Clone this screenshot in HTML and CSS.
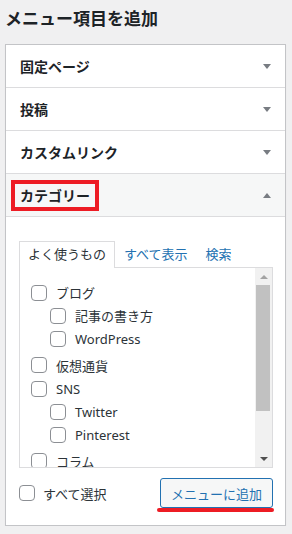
FILE: index.html
```html
<!DOCTYPE html>
<html lang="ja">
<head>
  <meta charset="UTF-8" />
  <meta name="viewport" content="width=device-width, initial-scale=1.0"/>
  <title>メニュー項目を追加</title>
  <link rel="stylesheet" href="styles.css">
</head>
<body>

  <h2 class="title">メニュー項目を追加</h2>

  <div class="panel">
    <div class="acc-row">
      <span>固定ページ</span>
      <i class="arrow down"></i>
    </div>
    <div class="acc-row">
      <span>投稿</span>
      <i class="arrow down"></i>
    </div>
    <div class="acc-row">
      <span>カスタムリンク</span>
      <i class="arrow down"></i>
    </div>
    <div class="acc-row open">
      <span class="mark">カテゴリー</span>
      <i class="arrow up"></i>
    </div>

    <div class="acc-body">
      <ul class="tabs">
        <li class="active">よく使うもの</li>
        <li>すべて表示</li>
        <li>検索</li>
      </ul>

      <div class="tab-box">
        <ul class="checklist">
          <li><span class="cb"></span>ブログ</li>
          <li class="sub">
            <ul>
              <li><span class="cb"></span>記事の書き方</li>
              <li><span class="cb"></span>WordPress</li>
            </ul>
          </li>
          <li><span class="cb"></span>仮想通貨</li>
          <li><span class="cb"></span>SNS</li>
          <li class="sub">
            <ul>
              <li><span class="cb"></span>Twitter</li>
              <li><span class="cb"></span>Pinterest</li>
            </ul>
          </li>
          <li><span class="cb"></span>コラム</li>
        </ul>
        <div class="scrollbar">
          <div class="sb-btn"><i class="sb-up"></i></div>
          <div class="sb-track"><div class="sb-thumb"></div></div>
          <div class="sb-btn"><i class="sb-down"></i></div>
        </div>
      </div>

      <div class="footer">
        <label class="select-all"><span class="cb"></span>すべて選択</label>
        <button class="add-btn">メニューに追加</button>
      </div>
    </div>
  </div>

</body>
</html>
```

FILE: styles.css
```css
* {
  margin: 0; padding: 0; box-sizing: border-box;
  font-family: 'Noto Sans', 'Noto Sans CJK JP', sans-serif;
}
body {
  background: #f0f0f1;
  color: #2c3338;
  padding: 0 6px 0 5px;
}
.title {
  padding-top: 8px;
  margin-bottom: 14px;
  line-height: 22px;
  font-size: 17px;
  font-weight: 700;
  color: #1d2327;
}
.panel {
  background: #fff;
  border: 1px solid #c3c4c7;
  box-shadow: 0 1px 1px rgba(0, 0, 0, 0.06);
}
.acc-row {
  height: 43px;
  border-bottom: 1px solid #dcdcde;
  padding: 0 14px 0 14px;
  display: flex;
  align-items: center;
  justify-content: space-between;
  font-size: 14px;
  font-weight: 700;
  color: #1d2327;
}
.acc-row.open {
  background: #f6f7f7;
}
.mark {
  margin-left: -9px;
  height: 31px;
  line-height: 23px;
  padding: 0 5px;
  border: 4px solid #ed1c24;
}
.arrow {
  width: 0;
  height: 0;
  border-left: 4px solid transparent;
  border-right: 4px solid transparent;
}
.arrow.down {
  border-top: 5px solid #787c82;
}
.arrow.up {
  border-bottom: 5px solid #787c82;
}
.acc-body {
  padding: 24px 12px 17px 13px;
}
.tabs {
  list-style: none;
  display: flex;
  font-size: 13px;
}
.tabs li {
  line-height: 25px;
  padding: 1px 9px 0;
  color: #2271b1;
}
.tabs li.active {
  color: #2c3338;
  padding: 0 8px 1px;
  margin-bottom: -1px;
  background: #fff;
  border: 1px solid #dcdcde;
  border-bottom: none;
  position: relative;
}
.tab-box {
  height: 201px;
  border: 1px solid #dcdcde;
  display: flex;
  overflow: hidden;
}
.checklist {
  flex: 1;
  list-style: none;
  padding: 13px 0 0 11px;
  font-size: 13px;
  color: #2c3338;
}
.checklist li {
  height: 23.33px;
  display: flex;
  align-items: center;
}
.checklist li.sub {
  height: auto;
  display: block;
}
.checklist ul {
  list-style: none;
  padding-left: 19px;
  margin-bottom: 2.6px;
}
.cb {
  width: 16px;
  height: 16px;
  border: 1px solid #8c8f94;
  border-radius: 4px;
  background: #fff;
  margin-right: 9px;
  flex-shrink: 0;
}
.scrollbar {
  width: 17px;
  background: #f1f1f1;
  display: flex;
  flex-direction: column;
}
.sb-btn {
  height: 17px;
  display: flex;
  align-items: center;
  justify-content: center;
}
.sb-up, .sb-down {
  width: 0;
  height: 0;
  border-left: 4px solid transparent;
  border-right: 4px solid transparent;
}
.sb-up {
  border-bottom: 4px solid #a3a3a3;
}
.sb-down {
  border-top: 4px solid #505050;
}
.sb-track {
  flex: 1;
}
.sb-thumb {
  height: 126px;
  margin: 0 2px 0 1px;
  background: #c1c1c1;
}
.footer {
  margin-top: 10px;
  display: flex;
  justify-content: space-between;
  align-items: center;
}
.select-all {
  display: flex;
  align-items: center;
  font-size: 13px;
  color: #2c3338;
}
.select-all .cb {
  margin-right: 8px;
}
.add-btn {
  position: relative;
  width: 113px;
  height: 30px;
  padding: 0 10px;
  font-size: 13px;
  color: #2271b1;
  background: #f6f7f7;
  border: 1px solid #2271b1;
  border-radius: 3px;
  cursor: pointer;
}
.add-btn::after {
  content: '';
  position: absolute;
  left: -4px;
  right: -2px;
  top: calc(100% + 1px);
  height: 4px;
  border-radius: 2px;
  background: #ed1c24;
}
```
